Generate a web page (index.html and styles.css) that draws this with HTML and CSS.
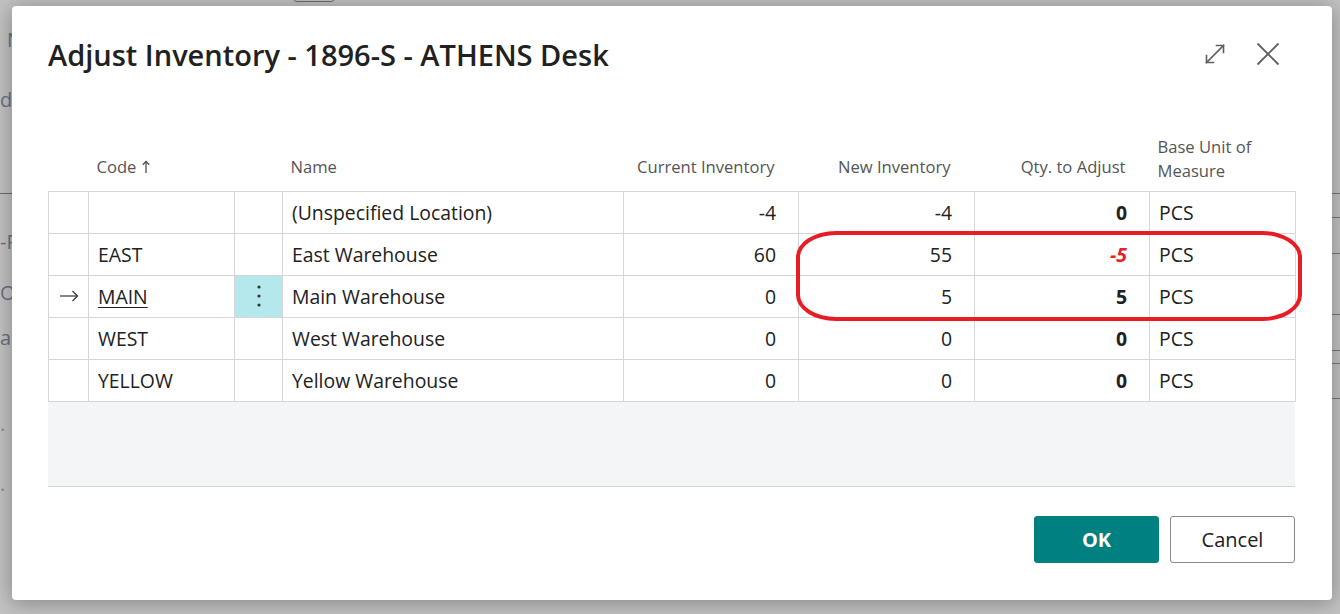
FILE: index.html
```html
<!DOCTYPE html>
<html lang="en">
<head>
<meta charset="utf-8">
<title>Adjust Inventory</title>
<link rel="stylesheet" href="styles.css">
</head>
<body>
<div class="backdrop">
  <div class="bg-top-btn"></div>
  <div class="bg-col">
    <div class="bg-word w-n">N</div>
    <div class="bg-word w-d">d</div>
    <div class="bg-rule"></div>
    <div class="bg-word w-p">-P</div>
    <div class="bg-word w-o">Or</div>
    <div class="bg-word w-a">ain</div>
    <div class="bg-dots d1">·</div>
    <div class="bg-dots d2">·</div>
  </div>
  <div class="bg-side">
    <div class="side-rule" style="margin-top:193px"></div>
    <div class="side-rule" style="margin-top:23px"></div>
    <div class="side-rule" style="margin-top:35px"></div>
    <div class="side-rule" style="margin-top:60px"></div>
    <div class="side-rule" style="margin-top:35px"></div>
    <div class="side-rule" style="margin-top:12px"></div>
    <div class="side-rule" style="margin-top:34px"></div>
  </div>
</div>

<div class="dialog" role="dialog" aria-label="Adjust Inventory">
  <header class="dlg-head">
    <h1 class="dlg-title">Adjust Inventory - 1896-S - ATHENS Desk</h1>
    <div class="dlg-tools">
      <button class="icon-btn" aria-label="Expand">
        <svg width="24" height="24" viewBox="0 0 24 24" fill="none" stroke="#5f5f5f" stroke-width="1.6" stroke-linecap="square">
          <path d="M3.5 20.5 L20.5 3.5"/>
          <path d="M13.5 3.5 H20.5 V10.5"/>
          <path d="M3.5 13.5 V20.5 H10.5"/>
        </svg>
      </button>
      <button class="icon-btn" aria-label="Close">
        <svg width="24" height="24" viewBox="0 0 24 24" fill="none" stroke="#5f5f5f" stroke-width="1.8">
          <path d="M1.5 1.5 L22.5 22.5"/>
          <path d="M22.5 1.5 L1.5 22.5"/>
        </svg>
      </button>
    </div>
  </header>

  <div class="grid-wrap">
    <table class="grid">
      <colgroup>
        <col class="c-ind"><col class="c-code"><col class="c-menu"><col class="c-name">
        <col class="c-cur"><col class="c-new"><col class="c-qty"><col class="c-uom">
      </colgroup>
      <thead>
        <tr>
          <th></th>
          <th class="left">Code <svg class="sort" width="8" height="14" viewBox="0 0 8 14" fill="none" stroke="#505050" stroke-width="1.3"><path d="M4 13 V1.5"/><path d="M0.8 4.8 L4 1.5 L7.2 4.8"/></svg></th>
          <th></th>
          <th class="left">Name</th>
          <th class="right">Current Inventory</th>
          <th class="right">New Inventory</th>
          <th class="right">Qty. to Adjust</th>
          <th class="left two">Base Unit of<br>Measure</th>
        </tr>
      </thead>
      <tbody>
        <tr>
          <td></td><td></td><td></td>
          <td>(Unspecified Location)</td>
          <td class="num">-4</td><td class="num">-4</td><td class="num b">0</td><td>PCS</td>
        </tr>
        <tr>
          <td></td><td>EAST</td><td></td>
          <td>East Warehouse</td>
          <td class="num">60</td><td class="num">55</td><td class="num b neg">-5</td><td>PCS</td>
        </tr>
        <tr class="current">
          <td class="ind">
            <svg width="20" height="12" viewBox="0 0 20 12" fill="none" stroke="#333" stroke-width="1.2"><path d="M1 6 H18.5"/><path d="M13.5 1 L18.5 6 L13.5 11"/></svg>
          </td>
          <td><span class="link">MAIN</span></td>
          <td class="menu">
            <svg width="4" height="22" viewBox="0 0 4 22" fill="#333"><circle cx="2" cy="2" r="1.6"/><circle cx="2" cy="11" r="1.6"/><circle cx="2" cy="20" r="1.6"/></svg>
          </td>
          <td>Main Warehouse</td>
          <td class="num">0</td><td class="num">5</td><td class="num b">5</td><td>PCS</td>
        </tr>
        <tr>
          <td></td><td>WEST</td><td></td>
          <td>West Warehouse</td>
          <td class="num">0</td><td class="num">0</td><td class="num b">0</td><td>PCS</td>
        </tr>
        <tr>
          <td></td><td>YELLOW</td><td></td>
          <td>Yellow Warehouse</td>
          <td class="num">0</td><td class="num">0</td><td class="num b">0</td><td>PCS</td>
        </tr>
      </tbody>
    </table>
    <div class="grid-filler"></div>
    <div class="highlight-ring"></div>
  </div>

  <footer class="dlg-foot">
    <button class="btn primary">OK</button>
    <button class="btn">Cancel</button>
  </footer>
</div>
</body>
</html>
```

FILE: styles.css
```css
* { box-sizing: border-box; }

html, body {
  margin: 0;
  height: 100%;
}

body {
  background: #c2c2c2;
  font-family: "Open Sans", "Noto Sans", sans-serif;
  color: #212121;
  overflow: hidden;
  position: relative;
}

/* dimmed page behind the modal */
.backdrop {
  height: 100%;
  display: flex;
  justify-content: space-between;
}

.bg-top-btn {
  position: absolute;
  left: 292px;
  top: -12px;
  width: 44px;
  height: 14px;
  border: 1px solid #6a6a6a;
  border-radius: 5px;
}

.bg-col {
  display: flex;
  flex-direction: column;
  align-items: flex-start;
  padding-top: 25px;
  color: #6b7280;
  font-size: 20px;
}

.bg-word { height: 30px; line-height: 30px; }
.w-n { margin-left: 7px; }
.w-d { margin-top: 30px; }
.w-p { margin-top: 33px; }
.w-o { margin-top: 21px; }
.w-a { margin-top: 15px; }

.bg-rule {
  margin-top: 78px;
  height: 1px;
  width: 14px;
  background: #6a6a6a;
}

.bg-dots {
  height: 30px;
  line-height: 30px;
  color: #8a8a8a;
}

.d1 { margin-top: 62px; }
.d2 { margin-top: 30px; }

.bg-side {
  width: 10px;
  display: flex;
  flex-direction: column;
}

.side-rule {
  height: 1px;
  background: #7a7a7a;
}

/* modal */
.dialog {
  position: absolute;
  left: 12px;
  top: 6px;
  width: 1320px;
  height: 594px;
  background: #fff;
  border-radius: 4px;
  box-shadow: 0 0 22px rgba(0, 0, 0, 0.22), 0 6px 18px rgba(0, 0, 0, 0.12);
  padding: 0 37px 0 36px;
  display: flex;
  flex-direction: column;
}

.dlg-head {
  display: flex;
  align-items: center;
  justify-content: space-between;
  height: 97px;
}

.dlg-title {
  margin: 0;
  font-size: 29px;
  font-weight: 600;
  letter-spacing: 0;
  color: #212121;
}

.dlg-tools {
  display: flex;
  gap: 29px;
  margin-right: 15px;
  margin-top: -2px;
}

.icon-btn {
  border: 0;
  padding: 0;
  background: none;
  width: 24px;
  height: 24px;
  display: flex;
}

.grid-wrap {
  position: relative;
  margin-top: 27px;
}

.grid {
  width: 1247px;
  border-collapse: collapse;
  table-layout: fixed;
}

.c-ind { width: 40px; }
.c-code { width: 146px; }
.c-menu { width: 48px; }
.c-name { width: 341px; }
.c-cur { width: 175px; }
.c-new { width: 176px; }
.c-qty { width: 175px; }
.c-uom { width: 146px; }

.grid th {
  height: 61px;
  font-size: 16.6px;
  font-weight: 400;
  color: #555;
  vertical-align: bottom;
  padding: 0 8px 12px;
  line-height: 24px;
  white-space: nowrap;
}

.grid th.left { text-align: left; }
.grid th.right { text-align: right; padding-right: 24px; }
.grid th.two { padding-bottom: 8px; }

.sort { vertical-align: -1px; margin-left: 1px; }

.grid td {
  height: 42px;
  border: 1px solid #d6d6d6;
  padding: 0 9px;
  font-size: 19.4px;
  white-space: nowrap;
}

.grid td.num {
  text-align: right;
  padding-right: 22px;
}

.grid td.b { font-weight: 700; }

.grid td.neg {
  color: #e3222b;
  font-style: italic;
}

.grid td.ind {
  text-align: center;
  padding: 0;
}

.grid td.ind svg { display: block; margin: 0 auto; }

.grid td.menu {
  background: #b4e8ec;
  text-align: center;
  padding: 0;
}

.grid td.menu svg { display: block; margin: 0 auto; }

.link {
  text-decoration: underline;
  text-underline-offset: 3px;
}

.grid-filler {
  height: 85px;
  background: #f4f5f7;
  border-bottom: 1px solid #d6d6d6;
}

/* annotation ring drawn over the two changed rows */
.highlight-ring {
  position: absolute;
  left: 748px;
  top: 101px;
  width: 506px;
  height: 90px;
  border: 4px solid #e81c24;
  border-radius: 40px / 26px;
  pointer-events: none;
}

.dlg-foot {
  display: flex;
  justify-content: flex-end;
  gap: 11px;
  margin-top: 29px;
}

.btn {
  width: 125px;
  height: 47px;
  border: 1px solid #8a8a8a;
  border-radius: 3px;
  background: #fff;
  font-family: inherit;
  font-size: 20px;
  color: #212121;
}

.btn.primary {
  background: #008080;
  border-color: #008080;
  color: #fff;
  font-weight: 700;
}
```
